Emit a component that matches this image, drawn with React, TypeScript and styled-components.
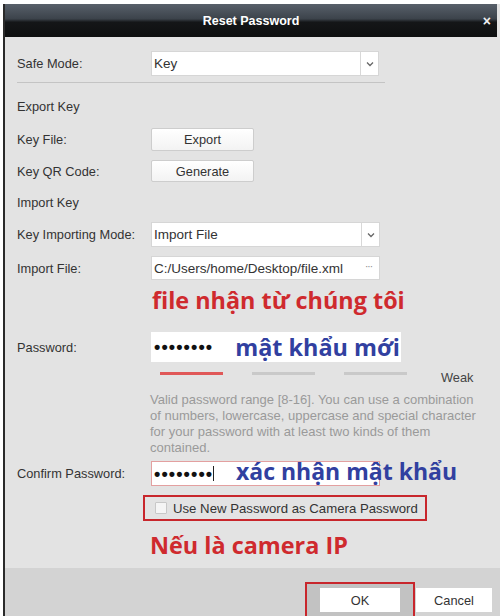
import styled, { createGlobalStyle } from 'styled-components'

const GlobalStyle = createGlobalStyle`
  html, body {
    margin: 0;
    padding: 0;
    background: #ffffff;
  }
  body {
    font-family: 'Liberation Sans', Arial, sans-serif;
    font-size: 12.8px;
    color: #333333;
  }
`

const Screen = styled.div`
  width: 500px;
  height: 616px;
  padding: 4px 0 0 3px;
  box-sizing: border-box;
  overflow: hidden;
`

const Dialog = styled.div`
  height: 612px;
  display: flex;
  flex-direction: column;
  border-left: 2px solid #2a2a2a;
  background: #e3e3e3;
`

const TitleBar = styled.div`
  height: 33px;
  flex: none;
  display: flex;
  align-items: center;
  justify-content: center;
  position: relative;
  margin-right: 3px;
  background: linear-gradient(#58606a 0%, #3c434b 45%, #141618 55%, #0e0f10 100%);
  color: #ffffff;
  font-weight: bold;
  font-size: 12.5px;
`

const Close = styled.span`
  position: absolute;
  right: 6px;
  top: 9px;
  font-size: 14px;
  font-weight: bold;
  color: #f0f0f0;
`

const Content = styled.div`
  flex: 1;
  display: flex;
  flex-direction: column;
  padding: 14px 0 0 12px;
`

const Row = styled.div<{ $top?: number; $h: number }>`
  display: grid;
  grid-template-columns: 134px 1fr;
  align-items: center;
  height: ${(p) => p.$h}px;
  margin-top: ${(p) => p.$top ?? 0}px;
`

const Label = styled.span`
  color: #333333;
  white-space: nowrap;
`

const Section = styled.div<{ $top: number }>`
  height: 20px;
  line-height: 20px;
  margin-top: ${(p) => p.$top}px;
  color: #333333;
`

const Divider = styled.div`
  height: 1px;
  width: 368px;
  margin-top: 6px;
  background: #c4c4c4;
`

const Field = styled.div<{ $w: number; $border?: string }>`
  width: ${(p) => p.$w}px;
  height: 100%;
  box-sizing: border-box;
  display: flex;
  align-items: center;
  position: relative;
  background: #ffffff;
  border: 1px solid ${(p) => p.$border ?? '#d6d6d6'};
  padding-left: 2px;
`

const FieldText = styled.span`
  flex: 1;
  color: #333333;
  font-size: 13.5px;
  white-space: nowrap;
`

const DropArrow = styled.span`
  width: 17px;
  height: 100%;
  display: flex;
  align-items: center;
  justify-content: center;
  border-left: 1px solid #d8d8d8;
`

const Ellipsis = styled.span`
  width: 14px;
  color: #888888;
  font-size: 10px;
  letter-spacing: -1px;
  margin-top: -4px;
`

const Button = styled.div<{ $w: number }>`
  width: ${(p) => p.$w}px;
  height: 100%;
  box-sizing: border-box;
  display: flex;
  align-items: center;
  justify-content: center;
  background: linear-gradient(#ffffff, #f3f3f3);
  border: 1px solid #cdcdcd;
  border-radius: 2px;
  color: #333333;
`

const Note = styled.div<{ $color: string; $top?: number; $left?: number }>`
  font-family: 'Open Sans', 'Noto Sans', sans-serif;
  font-weight: bold;
  font-size: 23.4px;
  line-height: 28px;
  color: ${(p) => p.$color};
  margin-top: ${(p) => p.$top ?? 0}px;
  margin-left: ${(p) => p.$left ?? 0}px;
  white-space: nowrap;
`

const OverNote = styled(Note)`
  position: absolute;
  top: -5px;
  left: 84px;
  font-size: 23px;
`

const Dots = styled.span`
  display: flex;
  align-items: center;
  font-size: 18px;
  font-weight: bold;
  letter-spacing: 1.1px;
  color: #111111;
  width: 82px;
  line-height: 18px;
`

const Cursor = styled.span`
  display: inline-block;
  width: 1px;
  height: 15px;
  background: #222222;
  margin-left: 0;
`

const Strength = styled.div`
  display: flex;
  align-items: center;
  height: 14px;
  margin-top: 13px;
  padding-left: 143px;
`

const Bar = styled.div<{ $on?: boolean }>`
  width: 63px;
  height: 3px;
  margin-right: 29px;
  background: ${(p) => (p.$on ? '#e05858' : '#c9c9c9')};
`

const Weak = styled.span`
  margin: 8px 0 0 5px;
  color: #444444;
`

const Hint = styled.div`
  margin: 12px 0 0 133px;
  color: #9a9a9a;
  line-height: 16px;
  font-size: 13px;
  white-space: nowrap;
`

const CheckRow = styled.div`
  display: flex;
  align-items: center;
  width: 284px;
  height: 26px;
  box-sizing: border-box;
  margin: 9px 0 0 126px;
  border: 2px solid #c8262c;
  padding-left: 10px;
  gap: 6px;
  color: #333333;
  font-size: 13.2px;
`

const Box = styled.span`
  width: 10px;
  height: 10px;
  border: 1px solid #c8c8c8;
  background: #f5f5f5;
  border-radius: 1px;
`

const Footer = styled.div`
  height: 48px;
  flex: none;
  display: flex;
  justify-content: flex-end;
  align-items: flex-start;
  padding: 14px 8px 0 0;
  box-sizing: border-box;
  background: #d3d3d3;
`

const Highlight = styled.div`
  display: flex;
  height: 34px;
  box-sizing: border-box;
  border: 2px solid #c8262c;
  border-bottom: none;
  padding: 4px 13px 0;
  margin-right: 1px;
  background: #c2c2c2;
`

const FootButton = styled(Button)`
  height: 24px;
  background: #ffffff;
  border: none;
  border-radius: 0;
`

const CancelButton = styled(FootButton)`
  margin-top: 6px;
`

const Chevron = () => (
  <svg width="8" height="6" viewBox="0 0 8 6">
    <path d="M1 1.5 L4 4.5 L7 1.5" fill="none" stroke="#666" strokeWidth="1.3" />
  </svg>
)

export default function App() {
  return (
    <>
      <GlobalStyle />
      <Screen>
        <Dialog>
          <TitleBar>
            Reset Password
            <Close>×</Close>
          </TitleBar>
          <Content>
            <Row $h={25}>
              <Label>Safe Mode:</Label>
              <Field $w={228}>
                <FieldText>Key</FieldText>
                <DropArrow>
                  <Chevron />
                </DropArrow>
              </Field>
            </Row>
            <Divider />
            <Section $top={14}>Export Key</Section>
            <Row $top={11} $h={23}>
              <Label>Key File:</Label>
              <Button $w={103}>Export</Button>
            </Row>
            <Row $top={9} $h={22}>
              <Label>Key QR Code:</Label>
              <Button $w={103}>Generate</Button>
            </Row>
            <Section $top={11}>Import Key</Section>
            <Row $top={9} $h={25}>
              <Label>Key Importing Mode:</Label>
              <Field $w={229}>
                <FieldText>Import File</FieldText>
                <DropArrow>
                  <Chevron />
                </DropArrow>
              </Field>
            </Row>
            <Row $top={9} $h={24}>
              <Label>Import File:</Label>
              <Field $w={229}>
                <FieldText>C:/Users/home/Desktop/file.xml</FieldText>
                <Ellipsis>···</Ellipsis>
              </Field>
            </Row>
            <Note $color="#cf2a2e" $top={6} $left={135}>
              file nhận từ chúng tôi
            </Note>
            <Row $top={18} $h={21}>
              <Label>Password:</Label>
              <Field $w={250} $border="#ffffff">
                <Dots>••••••••</Dots>
                <Note $color="#3140a0">mật khẩu mới</Note>
              </Field>
            </Row>
            <Strength>
              <Bar $on />
              <Bar />
              <Bar />
              <Weak>Weak</Weak>
            </Strength>
            <Hint>
              Valid password range [8-16]. You can use a combination
              <br />
              of numbers, lowercase, uppercase and special character
              <br />
              for your password with at least two kinds of them
              <br />
              contained.
            </Hint>
            <Row $top={5} $h={25}>
              <Label>Confirm Password:</Label>
              <Field $w={229} $border="#e3a0a0">
                <Dots>
                  ••••••••
                  <Cursor />
                </Dots>
                <OverNote $color="#3140a0">xác nhận mật khẩu</OverNote>
              </Field>
            </Row>
            <CheckRow>
              <Box />
              Use New Password as Camera Password
            </CheckRow>
            <Note $color="#cf2a2e" $top={10} $left={133}>
              Nếu là camera IP
            </Note>
          </Content>
          <Footer>
            <Highlight>
              <FootButton $w={80}>OK</FootButton>
            </Highlight>
            <CancelButton $w={76}>Cancel</CancelButton>
          </Footer>
        </Dialog>
      </Screen>
    </>
  )
}
